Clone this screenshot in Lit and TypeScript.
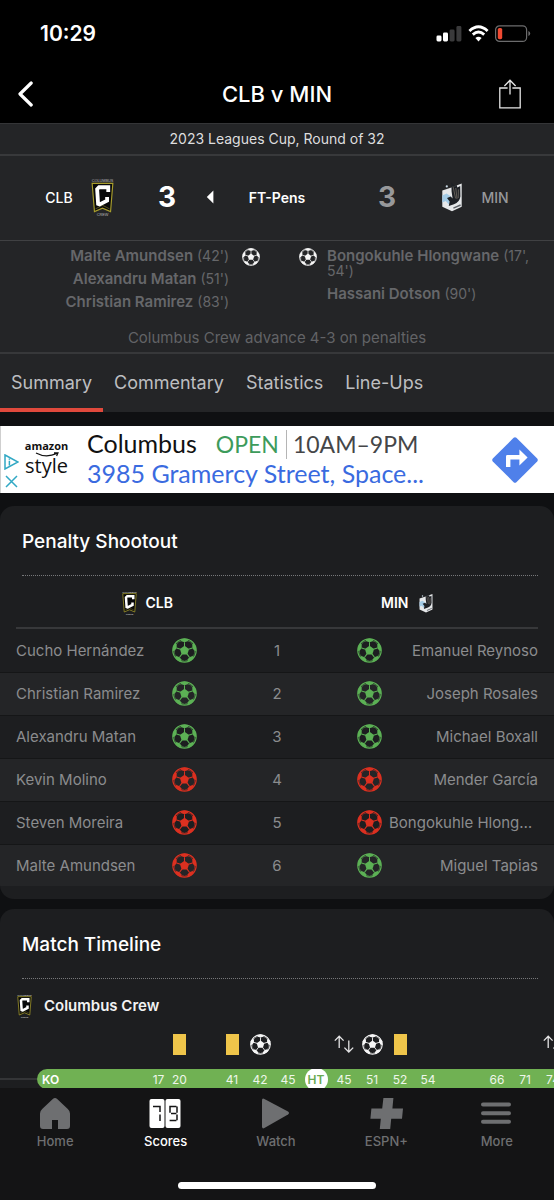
import { LitElement, html, svg, css, nothing } from "lit";
import { customElement, property } from "lit/decorators.js";
import { classMap } from "lit/directives/class-map.js";
import { styleMap } from "lit/directives/style-map.js";

const polar = (r: number, deg: number) => {
  const a = (deg * Math.PI) / 180;
  return `${(12 + r * Math.cos(a)).toFixed(2)},${(12 + r * Math.sin(a)).toFixed(2)}`;
};
const spokes = [-90, -18, 54, 126, 198];

const ball = (tone: string) => html`
  <svg class="ball ${tone}" viewBox="0 0 24 24" aria-hidden="true">
    <circle cx="12" cy="12" r="11.2" fill="none" stroke="currentColor" stroke-width="1.2" />
    <polygon points=${spokes.map((a) => polar(4.6, a)).join(" ")} fill="currentColor" />
    ${spokes.map(
      (a) => svg`
        <polyline points="${polar(4, a)} ${polar(8, a)}" stroke="currentColor" stroke-width="1" />
        <polygon fill="currentColor"
          points="${polar(7.9, a)} ${polar(9.4, a + 19)} ${polar(11.3, a + 21)} ${polar(11.6, a)} ${polar(11.3, a - 21)} ${polar(9.4, a - 19)}" />
        <polyline points="${polar(9.6, a + 19)} ${polar(10.3, a + 36)} ${polar(9.6, a + 53)}" fill="none" stroke="currentColor" stroke-width="0.5" />`
    )}
  </svg>
`;

const crewCrest = html`
  <svg class="crest crew" viewBox="0 0 24 42" role="img" aria-label="Columbus Crew crest">
    <text x="12" y="5" text-anchor="middle" font-family="Liberation Sans" font-size="4" fill="#b4b4b4">COLUMBUS</text>
    <path d="M1.2 6.8H22.8L20.4 36.2L12 32.6L3.6 36.2Z" fill="#08090a" stroke="#a89d2c" stroke-width="1.2" />
    <path d="M4.6 33.4L12 29.6L19.4 33.4" fill="none" stroke="#77712a" stroke-width="0.7" />
    <path d="M18 15.8V10.8H8.4L6.4 12.8L7.4 28.2L9 28.8L16.8 24.8V21" fill="none" stroke="#fff" stroke-width="4" />
    <text x="12" y="41" text-anchor="middle" font-family="Liberation Sans" font-size="4" fill="#b4b4b4">CREW</text>
  </svg>
`;

const loonsCrest = html`
  <svg class="crest loons" viewBox="0 0 20 30" role="img" aria-label="Minnesota United crest">
    <path d="M0.3 8.4L9.4 5.4L19.7 1.6V24.8L10 29.2L0.3 24.8Z" fill="#e6e8ea" />
    <path d="M0.3 13.4L4.6 11.6L8.6 14.2L6.8 22.4L3.8 19L0.3 20.4Z" fill="#a3cbe6" />
    <path d="M9.4 0.4L13 4.6L14.4 2.4L15.4 5.6L18.2 4L18.4 14.6Q17.6 20.4 12 22.2L6.8 24L7.6 19.6L5 16L8.8 14.6L10.6 16.6L9.6 9.6Z" fill="#1d2025" />
    <path d="M11 4.4L13.6 16.4M13.8 6L15 17M16.4 7.4L16.2 16" stroke="#7d756b" stroke-width="0.7" />
    <path d="M11.4 26.2L18.6 23" stroke="#5c6167" stroke-width="1.4" />
    <circle cx="4.8" cy="4.4" r="1.1" fill="#c9d9e4" />
  </svg>
`;

const subIcon = html`
  <svg class="sub" viewBox="0 0 20 18" aria-label="Substitution" role="img">
    <path d="M5.2 13V1.4M0.8 5.6L5.2 1.2L9.6 5.6M14.8 5.4V17M10.4 12.6L14.8 17L19.2 12.6" fill="none" stroke="#e4e4e5" stroke-width="1.3" />
  </svg>
`;

const navIcons: Record<string, unknown> = {
  Home: svg`<path d="M13.8 2Q16 0 18.2 2L28.8 12Q31 14 31 16.4V29Q31 32 28 32H19V23H13V32H4Q1 32 1 29V16.4Q1 14 3.2 12Z" fill="currentColor" />`,
  Scores: svg`
    <rect x="0.5" y="2" width="15" height="29" rx="2" fill="#fff" />
    <rect x="16.5" y="2" width="15" height="29" rx="2" fill="#fff" />
    <path d="M4 9.6H11V15M11 17.6V24M27.4 9.6H21V15.8M28 9.6V15.8M22 16.4H27.4M28 17.4V23.2M20.6 23.4H27.4" fill="none" stroke="#151516" stroke-width="1.5" />`,
  Watch: svg`<path d="M3 3.4Q3 0.8 5.4 2L29 14.6Q31 16 29 17.6L5.4 31Q3 32.2 3 29.6Z" fill="currentColor" />`,
  "ESPN+": svg`<path d="M13.4 1H23.4L22.4 11.6H33L32 21.8H21.2L20.2 32H9.8L10.8 21.8H0.4L1.4 11.6H12.2Z" fill="currentColor" />`,
  More: svg`<path d="M3 7.6H29M3 16.2H29M3 24.8H29" stroke="currentColor" stroke-width="4" stroke-linecap="round" />`,
};

const ballStyles = css`
  .ball { display: block; width: 25px; height: 25px; flex: none; }
  .ball.white { color: #f6f6f6; width: 18px; height: 18px; }
  .ball.scored { color: #5cb155; }
  .ball.missed { color: #dc3020; }
  .crest { display: block; flex: none; }
`;

@customElement("app-statusbar")
class AppStatusbar extends LitElement {
  static styles = css`
    :host { display: flex; justify-content: space-between; align-items: center; height: 66px; padding: 0 23px 0 40px; box-sizing: border-box; }
    .time { font-size: 21px; font-weight: 600; color: #fff; }
    .signs { display: flex; align-items: center; gap: 6px; }
    svg { display: block; }
  `;
  render() {
    return html`
      <span class="time">10:29</span>
      <span class="signs">
        <svg width="26" height="17" viewBox="0 0 26 17" role="img" aria-label="Signal">
          <rect x="0.5" y="10.5" width="5" height="6" rx="1.4" fill="#fff" />
          <rect x="7" y="7.5" width="5" height="9" rx="1.4" fill="#fff" />
          <rect x="13.6" y="4.5" width="5" height="12" rx="1.4" fill="#3a3a3b" />
          <rect x="20.4" y="1" width="5" height="15.5" rx="1.4" fill="#3a3a3b" />
        </svg>
        <svg width="21" height="17" viewBox="0 0 21 17" role="img" aria-label="Wi-Fi">
          <path d="M1.4 6Q10.5 -2.4 19.6 6M4.8 9.6Q10.5 4.4 16.2 9.6" fill="none" stroke="#fff" stroke-width="2.8" />
          <path d="M10.5 16.4L7.4 13.1Q10.5 10.4 13.6 13.1Z" fill="#fff" />
        </svg>
        <svg width="36" height="17" viewBox="0 0 36 17" role="img" aria-label="Battery low">
          <rect x="0.6" y="0.8" width="31" height="15.6" rx="4" fill="none" stroke="#6c6c6d" stroke-width="1.2" />
          <rect x="2.8" y="3" width="4.4" height="11.2" rx="1.6" fill="#f04a32" />
          <path d="M33.4 6Q35.2 6.6 35.2 8.5T33.4 11Z" fill="#6c6c6d" />
        </svg>
      </span>
    `;
  }
}

@customElement("score-header")
class ScoreHeader extends LitElement {
  static styles = [
    ballStyles,
    css`
      :host { display: block; background: #242527; color: #fff; }
      .league { margin: 0; height: 33px; line-height: 29px; box-sizing: border-box; border-top: 1px solid #343537; border-bottom: 2px solid #38393b; text-align: center; font-size: 14px; color: #dededf; }
      .score { display: grid; grid-template-columns: 48px 38px 69px 1fr 69px 38px 48px; align-items: center; height: 85px; box-sizing: border-box; padding: 0 35px 2px; border-bottom: 1px solid #404143; text-align: center; }
      .abbr { font-size: 14px; font-weight: 500; }
      .dim { color: #97989a; }
      .goals { font-size: 28px; font-weight: 700; line-height: 32px; padding-left: 23px; }
      .goals.dim { padding: 0 23px 0 0; }
      .crew { width: 23px; height: 42px; margin: 0 auto; }
      .loons { width: 20px; height: 30px; margin: 0 auto; }
      .state { display: grid; grid-template-columns: 40px 1fr 40px; align-items: center; font-size: 14px; font-weight: 600; }
      .arrow { display: block; margin: 0 auto; }
      .scorers { display: grid; grid-template-columns: 1fr 1fr; padding-top: 7px; min-height: 84px; box-sizing: border-box; }
      .side { display: flex; gap: 13px; padding-right: 17px; justify-content: flex-end; text-align: right; }
      .side.away { gap: 10px; padding: 0 16px 0 22px; justify-content: flex-start; text-align: left; }
      ul { list-style: none; margin: 0; padding: 0; display: flex; flex-direction: column; gap: 8px; color: #66676a; font-size: 14px; line-height: 15px; }
      li b { font-weight: 600; font-size: 15px; }
      .note { margin: 0; height: 29px; line-height: 25px; box-sizing: border-box; text-align: center; font-size: 15px; color: #626366; border-bottom: 2px solid #37383a; }
    `,
  ];
  private list(items: [string, string][]) {
    return html`<ul>${items.map(([n, t]) => html`<li><b>${n}</b> (${t})</li>`)}</ul>`;
  }
  render() {
    return html`
      <p class="league">2023 Leagues Cup, Round of 32</p>
      <div class="score">
        <span class="abbr">CLB</span>
        ${crewCrest}
        <span class="goals">3</span>
        <span class="state">
          <svg class="arrow" width="8" height="14" viewBox="0 0 8 14" aria-hidden="true"><path d="M7.4 0.6V13.4L0.8 7Z" fill="#fff" /></svg>
          <span>FT-Pens</span>
        </span>
        <span class="goals dim">3</span>
        ${loonsCrest}
        <span class="abbr dim">MIN</span>
      </div>
      <div class="scorers">
        <div class="side">
          ${this.list([["Malte Amundsen", "42'"], ["Alexandru Matan", "51'"], ["Christian Ramirez", "83'"]])}
          ${ball("white")}
        </div>
        <div class="side away">
          ${ball("white")}
          ${this.list([["Bongokuhle Hlongwane", "17', 54'"], ["Hassani Dotson", "90'"]])}
        </div>
      </div>
      <p class="note">Columbus Crew advance 4-3 on penalties</p>
    `;
  }
}

@customElement("store-ad")
class StoreAd extends LitElement {
  static styles = css`
    :host { display: flex; align-items: center; height: 67px; margin: 14px 0 13px; background: #fff; box-sizing: border-box; border-left: 1px solid #cfcfcf; font-family: Lato, "Open Sans", sans-serif; }
    .marks { display: flex; flex-direction: column; gap: 5px; padding: 23px 0 0 3px; width: 17px; }
    svg { display: block; }
    .brand { width: 51px; padding-bottom: 4px; text-align: center; color: #111; font-family: "Open Sans", "Noto Sans", sans-serif; }
    .brand .top { display: block; font-size: 11px; line-height: 12px; font-weight: 700; }
    .brand .low { display: block; font-size: 20px; line-height: 18px; }
    .brand svg { margin: 0 auto; }
    .copy { flex: 1; padding: 0 0 2px 15px; font-size: 25px; line-height: 29px; color: #111; white-space: nowrap; }
    .line { display: flex; align-items: baseline; }
    .open, .hours { font-size: 23px; }
    .open { color: #3d9b5b; margin-left: 19px; padding-right: 7px; border-right: 1px solid #b5b5b5; }
    .hours { color: #454648; margin-left: 6px; }
    a { color: #3a6be0; text-decoration: none; }
    .go { padding-right: 16px; }
  `;
  render() {
    return html`
      <span class="marks">
        <svg width="15" height="16" viewBox="0 0 15 16" role="img" aria-label="Ad choices"><path d="M1 1L14 8L1 15Z" fill="none" stroke="#31a8c4" stroke-width="1.5" /><path d="M5.4 6.8V11.4M5.4 4.4V5.8" stroke="#31a8c4" stroke-width="1.5" /></svg>
        <svg width="14" height="13" viewBox="0 0 14 13" role="img" aria-label="Close ad"><path d="M2 1L13 12M13 1L2 12" stroke="#31a8c4" stroke-width="1.5" /></svg>
      </span>
      <span class="brand">
        <span class="top">amazon</span>
        <svg width="28" height="5" viewBox="0 0 28 5" aria-hidden="true"><path d="M3 1Q13 6.4 24 1.4M21 0.8L25 0.8L23.6 4" fill="none" stroke="#111" stroke-width="1.2" /></svg>
        <span class="low">style</span>
      </span>
      <div class="copy">
        <div class="line"><span>Columbus</span><span class="open">OPEN</span><span class="hours">10AM–9PM</span></div>
        <a href="#directions">3985 Gramercy Street, Space...</a>
      </div>
      <svg class="go" width="46" height="46" viewBox="0 0 46 46" role="img" aria-label="Directions">
        <path d="M21.6 0.8Q23 -0.4 24.4 0.8L45.2 21.6Q46.4 23 45.2 24.4L24.4 45.2Q23 46.4 21.6 45.2L0.8 24.4Q-0.4 23 0.8 21.6Z" fill="#4f80ea" />
        <path d="M14 30V19.4Q14 18 15.4 18H27.4V12.6L35.6 20.6L27.4 28.6V22.6H18.4V30Z" fill="#fff" />
      </svg>
    `;
  }
}

type Kick = [string, boolean, boolean, string];

@customElement("penalty-table")
class PenaltyTable extends LitElement {
  static styles = [
    ballStyles,
    css`
      :host { display: block; }
      table { width: 100%; table-layout: fixed; border-collapse: collapse; font-size: 15px; color: #8b8c8e; }
      .ballcol { width: 40px; }
      .numcol { width: 26%; }
      th { padding: 0; }
      .head { display: flex; align-items: center; height: 53px; box-sizing: border-box; border-bottom: 2px solid #37383a; padding-top: 2px; color: #fff; font-size: 14px; font-weight: 600; line-height: 16px; }
      .home { margin-left: 16px; padding-right: 32px; gap: 9px; justify-content: flex-end; }
      .away { margin-right: 16px; padding-left: 32px; gap: 11px; }
      .crew { width: 15px; height: 27px; }
      .loons { width: 14px; height: 20px; }
      td { height: 43px; box-sizing: border-box; padding: 0; border-bottom: 1px solid #151617; font-weight: 400; }
      tbody tr:nth-child(even) { background: #242527; }
      tbody tr:last-child td { border-bottom: 0; height: 42px; }
      .name { padding-left: 16px; overflow: hidden; text-overflow: ellipsis; white-space: nowrap; }
      .name.right { padding: 0 16px 0 0; text-align: right; }
      .num { text-align: center; }
      .ball { margin: 0 auto; }
    `,
  ];
  private kicks: Kick[] = [
    ["Cucho Hernández", true, true, "Emanuel Reynoso"],
    ["Christian Ramirez", true, true, "Joseph Rosales"],
    ["Alexandru Matan", true, true, "Michael Boxall"],
    ["Kevin Molino", false, false, "Mender García"],
    ["Steven Moreira", false, false, "Bongokuhle Hlongwane"],
    ["Malte Amundsen", false, true, "Miguel Tapias"],
  ];
  render() {
    return html`
      <table>
        <colgroup><col /><col class="ballcol" /><col class="numcol" /><col class="ballcol" /><col /></colgroup>
        <thead>
          <tr>
            <th colspan="2"><div class="head home">${crewCrest}<span>CLB</span></div></th>
            <th><div class="head"></div></th>
            <th colspan="2"><div class="head away"><span>MIN</span>${loonsCrest}</div></th>
          </tr>
        </thead>
        <tbody>
          ${this.kicks.map(
            ([home, h, a, away], i) => html`
              <tr>
                <td class="name">${home}</td>
                <td>${ball(h ? "scored" : "missed")}</td>
                <td class="num">${i + 1}</td>
                <td>${ball(a ? "scored" : "missed")}</td>
                <td class="name right">${away}</td>
              </tr>
            `
          )}
        </tbody>
      </table>
    `;
  }
}

interface Moment { label: string; span: number; kind?: "card" | "goal" | "sub" }

@customElement("match-timeline")
class MatchTimeline extends LitElement {
  static styles = [
    ballStyles,
    css`
      :host { display: block; }
      .team { display: flex; align-items: center; gap: 12px; height: 52px; padding-left: 17px; font-size: 15px; font-weight: 600; color: #f2f2f2; }
      .crew { width: 15px; height: 27px; }
      .strip { display: flex; overflow: hidden; }
      .lead { flex: none; width: 37px; align-self: flex-end; height: 9px; border-top: 2px solid #343537; }
      .track { display: flex; flex: none; }
      .moment { flex: none; display: flex; flex-direction: column; }
      .icon { display: flex; align-items: center; justify-content: center; height: 26px; padding-bottom: 12px; }
      .icon .ball { width: 21px; height: 21px; }
      .card { width: 13px; height: 21px; background: #efc54a; }
      .sub { display: block; width: 20px; height: 18px; }
      .minute { display: flex; align-items: center; justify-content: center; height: 20px; background: #70b153; color: #eef6ea; font-size: 12px; overflow: hidden; }
      .first .minute { border-radius: 10px 0 0 10px; justify-content: flex-start; padding-left: 5px; font-weight: 600; color: #fff; }
      .half { display: flex; align-items: center; justify-content: center; width: 23px; height: 23px; flex: none; border-radius: 50%; background: #fff; color: #6aa951; font-weight: 600; }
    `,
  ];
  private moments: Moment[] = [
    { label: "KO", span: 111 },
    { label: "17", span: 21 },
    { label: "20", span: 21, kind: "card" },
    { label: "", span: 28 },
    { label: "41", span: 28, kind: "card" },
    { label: "42", span: 28, kind: "goal" },
    { label: "45", span: 28 },
    { label: "HT", span: 28 },
    { label: "45", span: 28, kind: "sub" },
    { label: "51", span: 28, kind: "goal" },
    { label: "52", span: 28, kind: "card" },
    { label: "54", span: 28 },
    { label: "", span: 41 },
    { label: "66", span: 28 },
    { label: "71", span: 28 },
    { label: "74", span: 28, kind: "sub" },
  ];
  private icon(kind?: string) {
    if (kind === "card") return html`<span class="card"></span>`;
    if (kind === "goal") return ball("white");
    if (kind === "sub") return subIcon;
    return nothing;
  }
  render() {
    return html`
      <div class="team">${crewCrest}<span>Columbus Crew</span></div>
      <div class="strip">
        <span class="lead"></span>
        <div class="track">
          ${this.moments.map(
            (m, i) => html`
              <div class=${classMap({ moment: true, first: i === 0 })} style=${styleMap({ width: `${m.span}px` })}>
                <span class="icon">${this.icon(m.kind)}</span>
                <span class="minute">${m.label === "HT" ? html`<span class="half">HT</span>` : m.label}</span>
              </div>
            `
          )}
        </div>
      </div>
    `;
  }
}

@customElement("bottom-nav")
class BottomNav extends LitElement {
  @property() active = "Scores";
  static styles = css`
    :host { display: block; height: 112px; flex: none; background: #141415; }
    nav { display: grid; grid-template-columns: repeat(5, 1fr); padding-right: 2px; }
    a { display: flex; flex-direction: column; align-items: center; gap: 2px; padding-top: 9px; color: #6e6f71; text-decoration: none; font-size: 13px; font-weight: 500; line-height: 18px; }
    a.on { color: #fff; }
    svg { display: block; width: 33px; height: 33px; }
    .pill { width: 198px; height: 7px; border-radius: 4px; background: #fff; margin: 32px auto 0; }
  `;
  render() {
    return html`
      <nav aria-label="Main">
        ${Object.entries(navIcons).map(
          ([label, icon]) => html`
            <a href="#${label}" class=${classMap({ on: label === this.active })}>
              <svg viewBox="0 0 33 33" aria-hidden="true">${icon}</svg>
              <span>${label}</span>
            </a>
          `
        )}
      </nav>
      <div class="pill"></div>
    `;
  }
}

@customElement("app-root")
class AppRoot extends LitElement {
  static styles = css`
    :host { display: flex; flex-direction: column; height: 100vh; overflow: hidden; background: #0f1012; font-family: Inter, "Liberation Sans", sans-serif; }
    .top { background: #000; flex: none; }
    .bar { display: grid; grid-template-columns: 66px 1fr 66px; align-items: center; height: 57px; box-sizing: border-box; padding-bottom: 2px; }
    h1 { margin: 0; text-align: center; color: #fff; font-size: 22px; font-weight: 500; line-height: 28px; }
    button { font: inherit; background: none; border: 0; padding: 0; cursor: pointer; }
    .bar button { display: flex; padding: 0 18px; }
    .bar button.share { padding: 0 11px; }
    svg { display: block; }
    main { flex: 1; min-height: 0; overflow: hidden; }
    .tabs { display: flex; height: 58px; background: #242527; }
    .tab { box-sizing: border-box; padding: 0 11px; border-top: 4px solid transparent; border-bottom: 4px solid transparent; color: #bdbec0; font-size: 18px; line-height: 50px; }
    .tab.on { border-bottom-color: #e0493c; }
    .panel { background: #1d1e20; border-radius: 14px; margin-bottom: 10px; padding-bottom: 13px; overflow: hidden; }
    h2 { margin: 0 16px 0 22px; height: 70px; line-height: 71px; box-sizing: border-box; border-bottom: 1px dotted #77787a; color: #fff; font-size: 19px; font-weight: 500; }
  `;
  private tabs = ["Summary", "Commentary", "Statistics", "Line-Ups"];
  render() {
    return html`
      <header class="top">
        <app-statusbar></app-statusbar>
        <div class="bar">
          <button aria-label="Back">
            <svg width="15" height="26" viewBox="0 0 15 26"><path d="M13.2 2L2 13L13.2 24" fill="none" stroke="#fff" stroke-width="3.2" stroke-linecap="round" stroke-linejoin="round" /></svg>
          </button>
          <h1>CLB v MIN</h1>
          <button class="share" aria-label="Share">
            <svg width="22" height="30" viewBox="0 0 22 30"><path d="M8.6 9H0.8V28.8H21.2V9H13.4M11 15.4V1.4M5.4 7L11 1.2L16.6 7" fill="none" stroke="#e6e6e6" stroke-width="1.3" /></svg>
          </button>
        </div>
      </header>
      <main>
        <score-header></score-header>
        <div class="tabs" role="tablist">
          ${this.tabs.map((t, i) => html`<button role="tab" aria-selected=${i === 0} class=${classMap({ tab: true, on: i === 0 })}>${t}</button>`)}
        </div>
        <store-ad></store-ad>
        <section class="panel">
          <h2>Penalty Shootout</h2>
          <penalty-table></penalty-table>
        </section>
        <section class="panel">
          <h2>Match Timeline</h2>
          <match-timeline></match-timeline>
        </section>
      </main>
      <bottom-nav></bottom-nav>
    `;
  }
}
